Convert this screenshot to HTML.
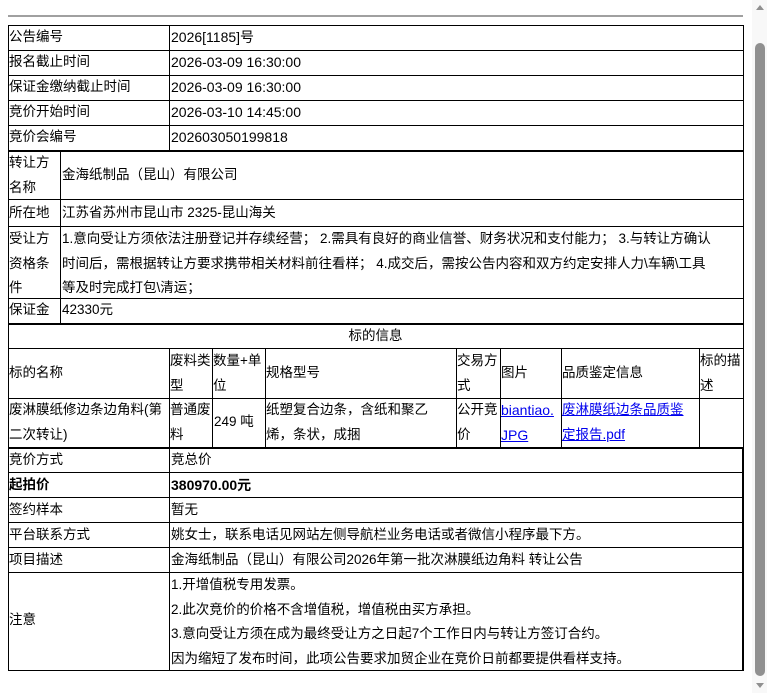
<!DOCTYPE html>
<html><head><meta charset="utf-8"><style>
*{margin:0;padding:0;box-sizing:border-box}
body{width:767px;height:693px;background:#fff;position:relative;overflow:hidden;font-family:"Liberation Sans","Noto Sans CJK SC",sans-serif;font-size:13.5px;color:#000}
.b{position:absolute;border:1px solid #000}
.t{position:absolute;line-height:24.5px;white-space:nowrap}
.l{position:absolute;background:#000}
a{color:#00e;text-decoration:underline}
.n{font-size:14px}
</style></head><body>
<div style="position:absolute;left:8px;top:15px;width:735px;height:2px;background:#a0a0a0"></div>
<div style="position:absolute;left:752px;top:0;width:15px;height:693px;background:#f8f8f8"></div>
<div style="position:absolute;left:755px;top:43px;width:10px;height:633px;background:#909090;border-radius:5px"></div>
<div style="position:absolute;left:756px;top:5px;width:0;height:0;border-left:4px solid transparent;border-right:4px solid transparent;border-bottom:5px solid #909090"></div>
<div style="position:absolute;left:756px;top:683px;width:0;height:0;border-left:4px solid transparent;border-right:4px solid transparent;border-top:5px solid #909090"></div>

<div class="b" style="left:8px;top:25px;width:736px;height:126px"></div>
<div class="l" style="left:169px;top:25px;width:1px;height:125px"></div>
<div class="l" style="left:8px;top:50px;width:735px;height:1px"></div>
<div class="l" style="left:8px;top:75px;width:735px;height:1px"></div>
<div class="l" style="left:8px;top:100px;width:735px;height:1px"></div>
<div class="l" style="left:8px;top:125px;width:735px;height:1px"></div>
<div class="t" style="left:9px;top:25px">公告编号</div><div class="t n" style="left:171px;top:25px">2026[1185]号</div>
<div class="t" style="left:9px;top:50px">报名截止时间</div><div class="t n" style="left:171px;top:50px">2026-03-09 16:30:00</div>
<div class="t" style="left:9px;top:75px">保证金缴纳截止时间</div><div class="t n" style="left:171px;top:75px">2026-03-09 16:30:00</div>
<div class="t" style="left:9px;top:100px">竞价开始时间</div><div class="t n" style="left:171px;top:100px">2026-03-10 14:45:00</div>
<div class="t" style="left:9px;top:125px">竞价会编号</div><div class="t n" style="left:171px;top:125px">202603050199818</div>

<div class="b" style="left:8px;top:150px;width:736px;height:174px;border-top-width:2px"></div>
<div class="l" style="left:60px;top:151px;width:1px;height:172px"></div>
<div class="l" style="left:8px;top:199px;width:735px;height:1px"></div>
<div class="l" style="left:8px;top:226px;width:735px;height:1px"></div>
<div class="l" style="left:8px;top:298px;width:735px;height:1px"></div>
<div class="t" style="left:9px;top:151px">转让方<br>名称</div>
<div class="t" style="left:62px;top:163px">金海纸制品（昆山）有限公司</div>
<div class="t" style="left:9px;top:201px">所在地</div>
<div class="t" style="left:62px;top:201px">江苏省苏州市昆山市 2325-昆山海关</div>
<div class="t" style="left:9px;top:227px">受让方<br>资格条<br>件</div>
<div class="t" style="left:62px;top:227px">1.意向受让方须依法注册登记并存续经营； 2.需具有良好的商业信誉、财务状况和支付能力； 3.与转让方确认<br>时间后，需根据转让方要求携带相关材料前往看样； 4.成交后，需按公告内容和双方约定安排人力\车辆\工具<br>等及时完成打包\清运；</div>
<div class="t" style="left:9px;top:298px">保证金</div><div class="t" style="left:62px;top:298px">42330元</div>

<div class="b" style="left:8px;top:323px;width:736px;height:125px;border-top-width:2px"></div>
<div class="t" style="left:8px;top:324px;width:735px;text-align:center">标的信息</div>
<div class="l" style="left:8px;top:348px;width:735px;height:1px"></div>
<div class="l" style="left:8px;top:398px;width:735px;height:1px"></div>
<div class="l" style="left:169px;top:348px;width:1px;height:99px"></div>
<div class="l" style="left:212px;top:348px;width:1px;height:99px"></div>
<div class="l" style="left:265px;top:348px;width:1px;height:99px"></div>
<div class="l" style="left:456px;top:348px;width:1px;height:99px"></div>
<div class="l" style="left:500px;top:348px;width:1px;height:99px"></div>
<div class="l" style="left:561px;top:348px;width:1px;height:99px"></div>
<div class="l" style="left:699px;top:348px;width:1px;height:99px"></div>
<div class="t" style="left:9px;top:361px">标的名称</div>
<div class="t" style="left:170px;top:349px">废料类<br>型</div>
<div class="t" style="left:213px;top:349px">数量+单<br>位</div>
<div class="t" style="left:266px;top:361px">规格型号</div>
<div class="t" style="left:457px;top:349px">交易方<br>式</div>
<div class="t" style="left:501px;top:361px">图片</div>
<div class="t" style="left:562px;top:361px">品质鉴定信息</div>
<div class="t" style="left:700px;top:349px">标的描<br>述</div>
<div class="t" style="left:9px;top:398px">废淋膜纸修边条边角料(第<br>二次转让)</div>
<div class="t" style="left:170px;top:398px">普通废<br>料</div>
<div class="t" style="left:214px;top:410px">249 吨</div>
<div class="t" style="left:266px;top:398px">纸塑复合边条，含纸和聚乙<br>烯，条状，成捆</div>
<div class="t" style="left:457px;top:398px">公开竞<br>价</div>
<div class="t n" style="left:501px;top:398px"><a>biantiao.<br>JPG</a></div>
<div class="t" style="left:562px;top:398px"><a>废淋膜纸边条品质鉴<br>定报告.pdf</a></div>

<div class="b" style="left:8px;top:447px;width:736px;height:224px;border-top-width:2px;border-right-width:2px"></div>
<div class="l" style="left:169px;top:448px;width:1px;height:222px"></div>
<div class="l" style="left:8px;top:472px;width:735px;height:1px"></div>
<div class="l" style="left:8px;top:497px;width:735px;height:1px"></div>
<div class="l" style="left:8px;top:522px;width:735px;height:1px"></div>
<div class="l" style="left:8px;top:547px;width:735px;height:1px"></div>
<div class="l" style="left:8px;top:572px;width:735px;height:1px"></div>
<div class="t" style="left:9px;top:448px">竞价方式</div><div class="t" style="left:171px;top:448px">竞总价</div>
<div class="t" style="left:9px;top:473px;font-weight:bold">起拍价</div><div class="t n" style="left:171px;top:473px;font-weight:bold">380970.00元</div>
<div class="t" style="left:9px;top:498px">签约样本</div><div class="t" style="left:171px;top:498px">暂无</div>
<div class="t" style="left:9px;top:523px">平台联系方式</div><div class="t" style="left:171px;top:523px">姚女士，联系电话见网站左侧导航栏业务电话或者微信小程序最下方。</div>
<div class="t" style="left:9px;top:548px">项目描述</div><div class="t" style="left:171px;top:548px">金海纸制品（昆山）有限公司2026年第一批次淋膜纸边角料 转让公告</div>
<div class="t" style="left:9px;top:608px">注意</div>
<div class="t" style="left:171px;top:573px">1.开增值税专用发票。<br>2.此次竞价的价格不含增值税，增值税由买方承担。<br>3.意向受让方须在成为最终受让方之日起7个工作日内与转让方签订合约。<br>因为缩短了发布时间，此项公告要求加贸企业在竞价日前都要提供看样支持。</div>
</body></html>
